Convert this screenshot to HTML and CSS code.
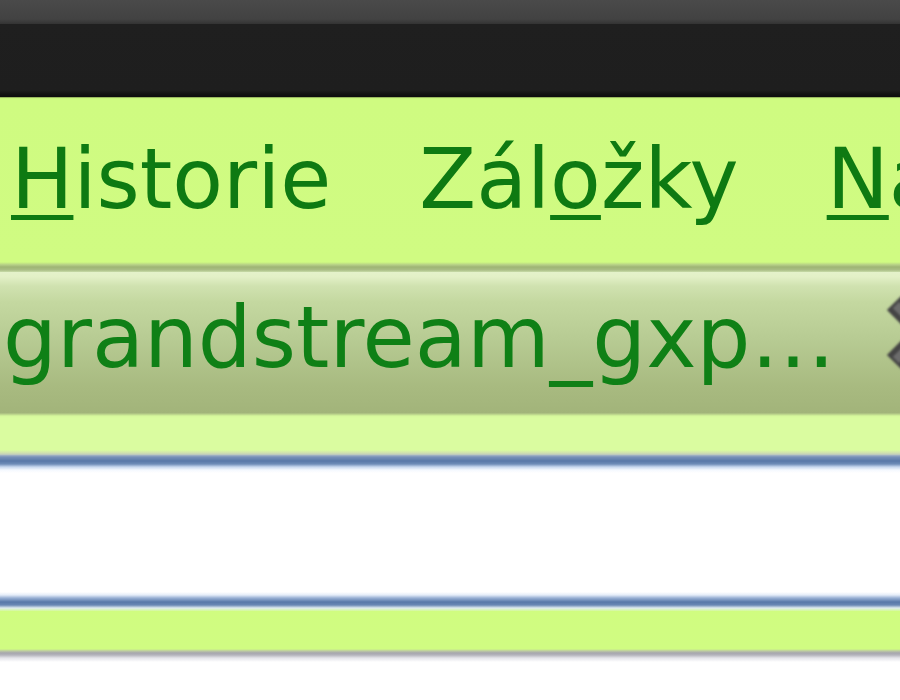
FILE: index.html
```html
<!DOCTYPE html>
<html lang="cs">
<head>
<meta charset="utf-8">
<title>Firefox</title>
<link rel="stylesheet" href="styles.css">
</head>
<body>
<div class="window">
  <div class="titlebar"></div>
  <div class="topbar"></div>
  <nav class="menubar">
    <span class="menu-item"><u>H</u>istorie</span>
    <span class="menu-item">Zál<u>o</u>žky</span>
    <span class="menu-item"><u>N</u>ástroje</span>
  </nav>
  <div class="tabstrip">
    <div class="tab">
      <span class="tab-title">grandstream_gxp…</span>
      <svg class="tab-close" width="80" height="90" viewBox="0 0 80 90">
        <g fill="none" stroke-linecap="butt">
          <path d="M10 15 L69 74 M10 74 L69 15" stroke="#444444" stroke-width="20"/>
          <path d="M12 17 L69 74 M12 72 L69 15" stroke="#6c6c6c" stroke-width="9"/>
        </g>
      </svg>
    </div>
  </div>
  <div class="tabstrip-bottom"></div>
  <div class="urlbar"></div>
  <div class="bottombar"></div>
</div>
</body>
</html>
```

FILE: styles.css
```css
html, body {
  margin: 0;
  padding: 0;
  background: #ffffff;
}
body {
  width: 900px;
  height: 700px;
  overflow: hidden;
  font-family: "DejaVu Sans", "Liberation Sans", sans-serif;
}
.window {
  display: flex;
  flex-direction: column;
  width: 900px;
  height: 700px;
  overflow: hidden;
}
.titlebar {
  height: 24px;
  flex: none;
  background: linear-gradient(#4a4a4a, #424242 80%, #333333);
}
.topbar {
  height: 73px;
  flex: none;
  background: linear-gradient(#1f1f1f 0, #1e1e1e 66px, #121212 70px, #0c0c0c 73px);
}
.menubar {
  height: 175px;
  flex: none;
  box-sizing: border-box;
  display: flex;
  align-items: flex-start;
  gap: 88px;
  padding: 33px 0 0 11px;
  white-space: nowrap;
  overflow: hidden;
  font-size: 83px;
  line-height: 99px;
  color: #0e7a12;
  background: linear-gradient(#6d7e42 0, #c6f27c 1px, #cffb81 3px, #d0fb82 165px, #b4cc86 168px, #9eb474 170px, #aabe86 173px, #c8dca8 175px);
}
.menu-item u {
  text-decoration-thickness: 5px;
  text-underline-offset: 7px;
}
.tabstrip {
  height: 141px;
  flex: none;
  overflow: hidden;
}
.tab {
  width: 964px;
  height: 141px;
  box-sizing: border-box;
  display: flex;
  align-items: flex-start;
  padding-left: 3px;
  background: linear-gradient(#e4f2ca 0, #e2f0c6 5px, #d0e2b0 14px, #c4d8a0 30px, #b6ca92 70px, #a8ba80 115px, #a2b47a 141px);
}
.tab-title {
  flex: 1;
  padding-top: 16px;
  font-size: 85px;
  line-height: 99px;
  color: #0f8016;
  white-space: nowrap;
}
.tab-close {
  flex: none;
  margin-top: 16px;
  overflow: visible;
  filter: blur(1.2px);
}
.tabstrip-bottom {
  height: 42px;
  flex: none;
  background: linear-gradient(#a6b87e 0, #d6f89c 3px, #dafca0 5px, #dafca0 37px, #d0e0b0 40px, #b8c4c0 42px);
}
.urlbar {
  height: 156px;
  flex: none;
  background: linear-gradient(#a8b8c4 0, #7890b8 2px, #5878a8 6px, #6e8cb8 9px, #c8d8f0 12px, #f4f8fe 15px, #ffffff 18px, #ffffff 137px, #e4ecf8 140px, #98b0d4 143px, #5878a8 147px, #6a88b4 150px, #e0ecf0 153px, #d4fa98 156px);
}
.bottombar {
  flex: 1;
  background: linear-gradient(#d0fc80 0, #d0fc82 38px, #bcc8a4 40px, #a6a6ae 42px, #b4b4bc 44px, #e4e4ea 47px, #ffffff 51px);
}
```
